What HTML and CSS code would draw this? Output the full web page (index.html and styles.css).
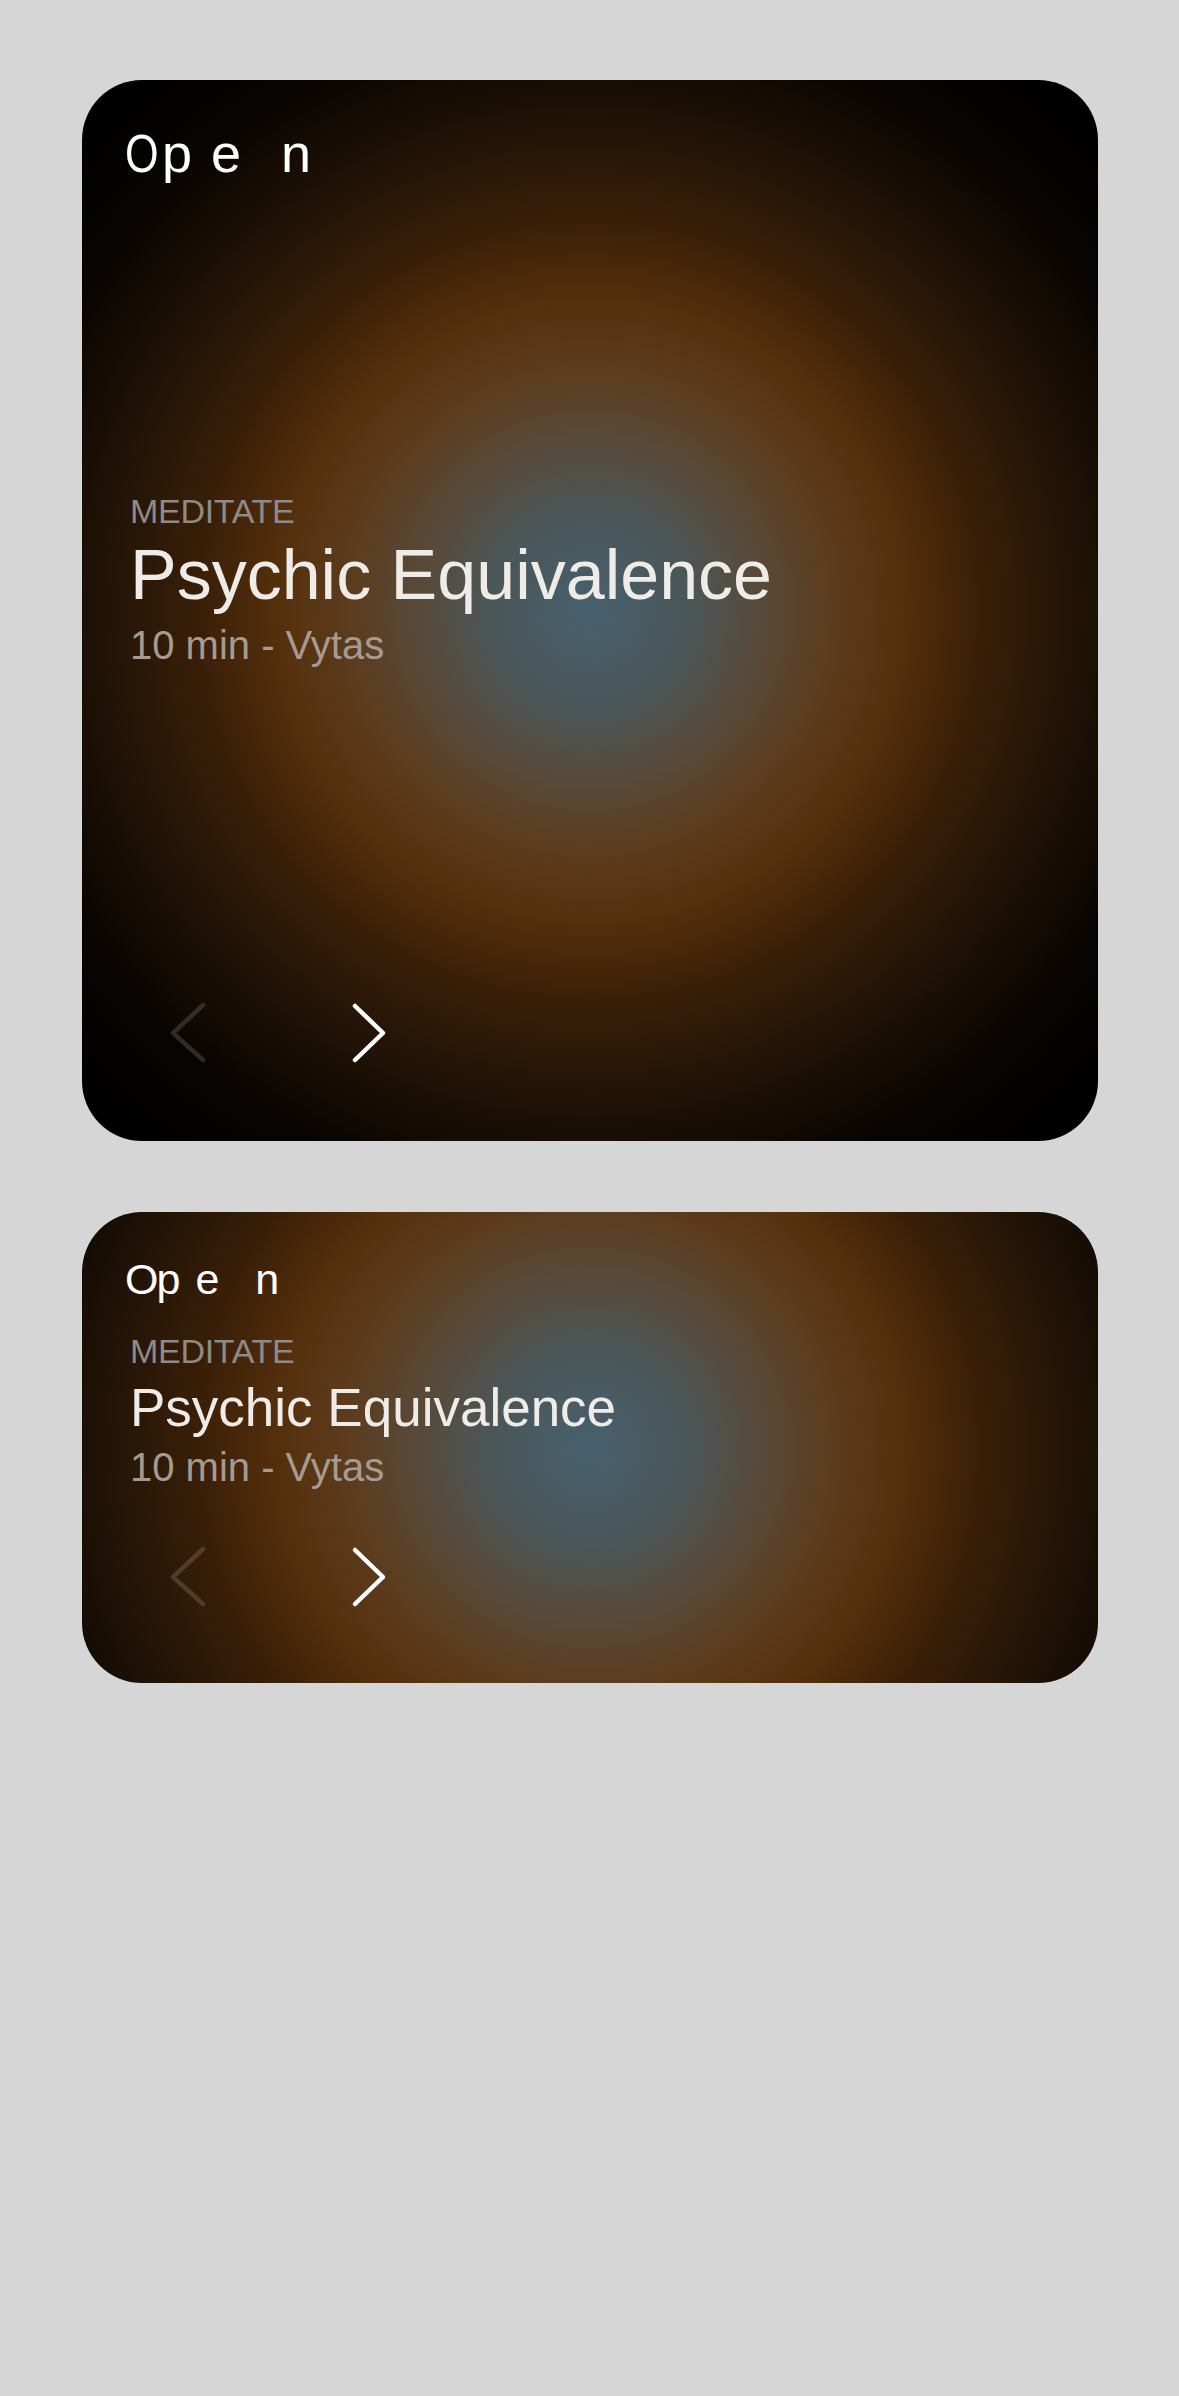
FILE: index.html
```html
<!DOCTYPE html>
<html lang="en">
<head>
<meta charset="utf-8">
<title>Meditate cards</title>
<link rel="stylesheet" href="styles.css">
</head>
<body>
<main class="stack">
  <section class="card card--large">
    <div class="open open--large"><span class="ch ch-o">O</span><span class="ch ch-p">p</span><span class="ch ch-e">e</span><span class="ch ch-n">n</span></div>
    <div class="info">
      <div class="kicker">MEDITATE</div>
      <div class="title">Psychic Equivalence</div>
      <div class="meta">10 min - Vytas</div>
    </div>
    <div class="nav">
      <svg class="chev chev--off" viewBox="0 0 40 64" width="40" height="64"><polyline points="35,4 5,32 35,59"/></svg>
      <svg class="chev chev--on" viewBox="0 0 40 64" width="40" height="64"><polyline points="5,5 33,32 5,59"/></svg>
    </div>
  </section>

  <section class="card card--small">
    <div class="open open--small"><span class="ch ch-o">O</span><span class="ch ch-p">p</span><span class="ch ch-e">e</span><span class="ch ch-n">n</span></div>
    <div class="info">
      <div class="kicker">MEDITATE</div>
      <div class="title">Psychic Equivalence</div>
      <div class="meta">10 min - Vytas</div>
    </div>
    <div class="nav">
      <svg class="chev chev--off" viewBox="0 0 40 64" width="40" height="64"><polyline points="35,4 5,32 35,59"/></svg>
      <svg class="chev chev--on" viewBox="0 0 40 64" width="40" height="64"><polyline points="5,5 33,32 5,59"/></svg>
    </div>
  </section>
</main>
</body>
</html>
```

FILE: styles.css
```css
* { box-sizing: border-box; }

html, body {
  margin: 0;
  padding: 0;
  background: #d6d6d6;
}

body {
  font-family: "Liberation Sans", Arial, Helvetica, sans-serif;
  min-height: 2396px;
}

.stack {
  display: flex;
  flex-direction: column;
  gap: 71px;
  padding: 80px 81px 0 82px;
}

.card {
  border-radius: 60px;
  overflow: hidden;
  display: flex;
  flex-direction: column;
  padding-left: 48px;
  background: radial-gradient(circle at 50% 50%,
    #46606e 0px,
    #4b5658 100px,
    #584a3a 170px,
    #5c3c1e 240px,
    #55300c 310px,
    #3a1f08 390px,
    #1c1005 510px,
    #080402 600px,
    #000000 700px);
}

.card--large {
  height: 1061px;
  padding-top: 46px;
}

.card--small {
  height: 471px;
  padding-top: 46px;
}

/* "Open" label with loose letters */
.open {
  color: #ffffff;
  white-space: nowrap;
  margin-left: -5px;
}

.ch { display: inline-block; }

.open--large {
  font-size: 54px;
  line-height: 54px;
}
.open--large .ch-o { transform: scaleX(0.8); transform-origin: left center; }
.open--large .ch-p { margin-left: -5px; }
.open--large .ch-e { margin-left: 19px; }
.open--large .ch-n { margin-left: 40px; }

.open--small {
  font-size: 43px;
  line-height: 43px;
}
.open--small .ch-p { margin-left: -2px; }
.open--small .ch-e { margin-left: 15px; }
.open--small .ch-n { margin-left: 36px; }

.info {
  display: flex;
  flex-direction: column;
}

.card--large .info { margin-top: 311px; }
.card--small .info { margin-top: 30px; }

.kicker {
  font-size: 34px;
  line-height: 40px;
  letter-spacing: -0.3px;
  color: #8f8a86;
}

.title {
  color: #efebe7;
  white-space: nowrap;
}

.card--large .title {
  font-size: 70px;
  line-height: 76px;
  margin-top: 6px;
}

.card--small .title {
  font-size: 53px;
  line-height: 58px;
  margin-top: 8px;
}

.meta {
  font-size: 40px;
  line-height: 46px;
  color: #a69b92;
}

.card--large .meta { margin-top: 9px; }
.card--small .meta { margin-top: 7px; }

.nav {
  display: flex;
  gap: 142px;
  margin-left: 38px;
}

.card--large .nav { margin-top: 333px; }
.card--small .nav { margin-top: 55px; }

.chev {
  display: block;
  fill: none;
  stroke-width: 4.5;
  stroke-linecap: round;
  stroke-linejoin: round;
}

.chev--off { stroke: rgba(255, 255, 255, 0.15); }
.chev--on { stroke: #ffffff; }
```
